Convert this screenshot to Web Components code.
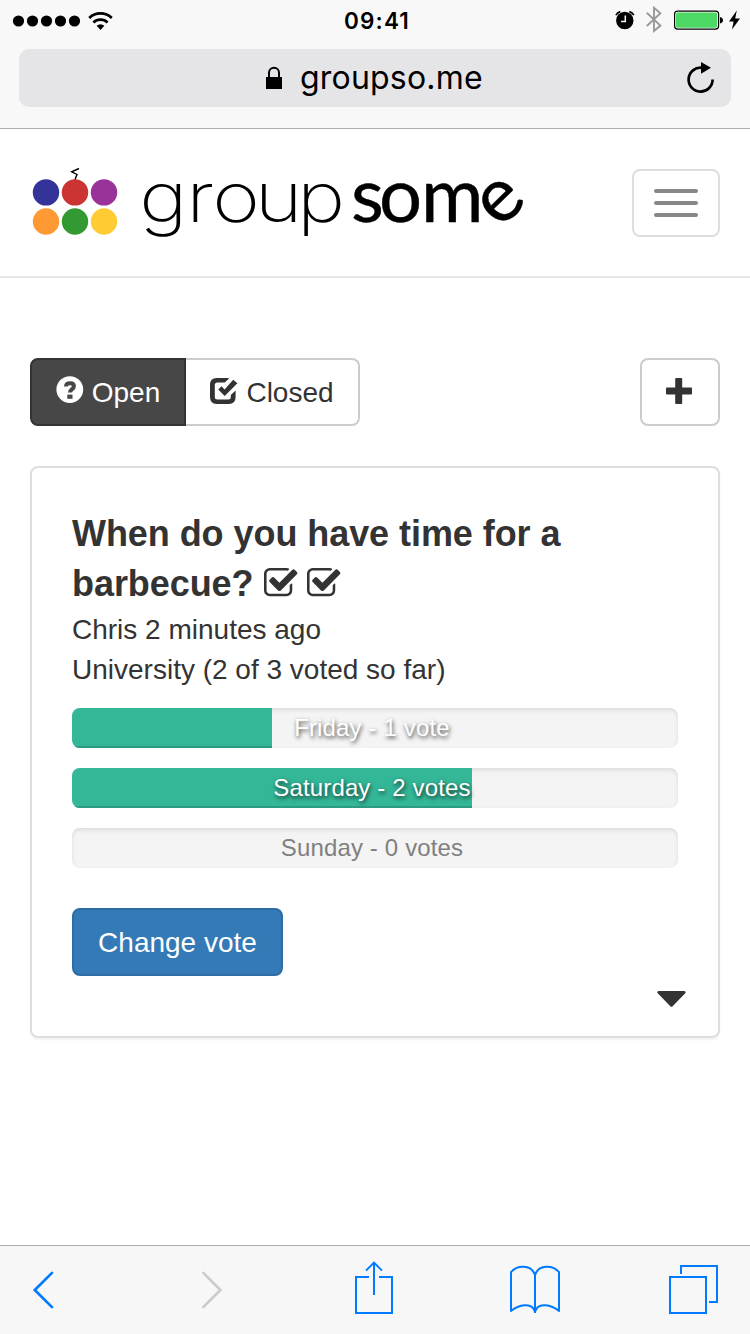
<!DOCTYPE html>
<html lang="en">
<head>
<meta charset="utf-8">
<title>groupsome</title>
<style>
html, body { margin: 0; height: 100%; background: #fff; }
body { font: 28px/40px "Liberation Sans", Arial, sans-serif; color: #333; overflow: hidden; }
</style>
</head>
<body>
<poll-app></poll-app>
<script>
const define = (name, html, setup) => {
  const template = document.createElement('template');
  template.innerHTML = '<style>*{box-sizing:border-box}svg{display:block;flex:none;overflow:visible}</style>' + html;
  customElements.define(name, class extends HTMLElement {
    constructor() {
      super();
      this.attachShadow({ mode: 'open' }).append(template.content.cloneNode(true));
    }
    connectedCallback() { if (setup) setup(this, this.shadowRoot); }
  });
};

/* Icon set: each entry is [width, height, viewBox, markup] */
const CHECK = '<path fill="currentColor" d="M1408 930v318q0 119-84.5 203.5t-203.5 84.5h-832q-119 0-203.5-84.5t-84.5-203.5v-832q0-119 84.5-203.5t203.5-84.5h832q63 0 117 25 15 7 18 23 3 17-9 29l-49 49q-10 10-23 10-3 0-9-2-23-6-45-6h-832q-66 0-113 47t-47 113v832q0 66 47 113t113 47h832q66 0 113-47t47-113v-254q0-13 9-22l64-64q10-10 23-10 6 0 12 3 20 8 20 29zm231-489l-814 814q-24 24-57 24t-57-24l-430-430q-24-24-24-57t24-57l110-110q24-24 57-24t57 24l263 263 647-647q24-24 57-24t57 24l110 110q24 24 24 57t-24 57z"/>';
const ICONS = {
  signal: [68, 12, '12 14.5 68 12', '<g fill="#000"><circle cx="18.5" cy="20.5" r="5.6"/><circle cx="32.5" cy="20.5" r="5.6"/><circle cx="46.5" cy="20.5" r="5.6"/><circle cx="60.5" cy="20.5" r="5.6"/><circle cx="74.5" cy="20.5" r="5.6"/></g>'],
  wifi: [26, 20, '88 10 26 20', '<g fill="none" stroke="#000" stroke-width="2.7"><path d="M89.2 17A16.2 16.2 0 0 1 111.8 17"/><path d="M93.4 21.4A10.4 10.4 0 0 1 107.6 21.4"/></g><path d="M96.6 24.8Q100.5 21.6 104.4 24.8L100.5 29z"/>'],
  alarm: [20, 20, '614.5 10 20 20', '<circle cx="624.3" cy="20.5" r="8.7"/><path d="M615.4 15.2Q616.6 12.4 619.8 11.6M628.8 11.6Q632 12.4 633.3 15.2" fill="none" stroke="#000" stroke-width="1.6"/><path d="M624.8 15.5V21.4H620.6" fill="none" stroke="#f7f7f7" stroke-width="1.5"/>'],
  bluetooth: [16, 28, '646 7 16 28', '<path d="M646.8 13.8L660.4 26.6L654 32V8.8L660.4 14.2L646.8 27" fill="none" stroke="#999" stroke-width="1.9"/>'],
  battery: [49, 20, '674 10.3 49 20', '<rect x="674.6" y="11.4" width="44" height="18" rx="3" fill="#fff" stroke="#000" stroke-width="1.2"/><rect x="676" y="12.8" width="41.2" height="15.2" rx="1.6" fill="#4cd964"/><path d="M720 17.2Q723 18 723 20.5T720 23.8z"/>'],
  bolt: [12, 20, '729 10 12 20', '<path d="M736.8 10.6L729 21.6H733.6L732 29.6L740 18.6H735.2z"/>'],
  lock: [16, 23, '266 67 16 23', '<rect x="266" y="77" width="16" height="12"/><path d="M269 78V72.7a5 5 0 0 1 10 0V78" fill="none" stroke="#000" stroke-width="2"/>'],
  reload: [28, 32, '687 61 28 32', '<path d="M712.6 79.6A12 12 0 1 1 702 67.7" fill="none" stroke="#000" stroke-width="2.7"/><path d="M701 62L711 67.8L701 73.7z"/>'],
  question: [28, 28, '56 376 28 28', '<circle cx="69.8" cy="389.6" r="13.4" fill="#fff"/><path d="M66 386.6C66 383.4 67.6 383.2 70.2 383.2C73 383.2 73.9 384.2 73.9 386.2C73.9 389.2 70 389 70 392.6" fill="none" stroke="#474747" stroke-width="4"/><rect x="67.3" y="394.6" width="5.2" height="4.2" fill="#474747"/>'],
  closed: [28, 28, '210 375.9 28 28', '<path fill="currentColor" fill-rule="evenodd" d="M229.3 378.2L224.8 382.5H217.4Q214.8 382.5 214.8 385V396.8Q214.8 399.3 217.4 399.3H228.2Q230.8 399.3 230.8 396.8V395L235.6 390.3V397Q235.6 403.8 229 403.8H216.6Q210 403.8 210 397V384.6Q210 377.8 216.6 377.8H227Q228.5 377.8 229.3 378.2z"/><path fill="currentColor" d="M218.3 389.3L221.4 386.2L224.6 389.3L233.2 379.6L237.4 383.2L224.7 395.8z"/>'],
  check: [33.4, 28.3, '0 128 1664 1408', CHECK],
  plus: [26, 26, '0 0 26 26', '<g fill="#333"><rect x="9.2" width="7" height="26" rx=".9"/><rect y="9.4" width="26" height="7" rx=".9"/></g>'],
  caret: [29, 16, '0 0 29 16', '<path d="M1.5 0H27.4Q29.2.4 28.5 2L15.6 15.2Q14.5 16.2 13.3 15.2L.5 2Q-.4.5 1.5 0z" fill="#333"/>'],
  back: [22, 38, '32 1271 22 38', '<path d="M52 1272.9L34.8 1290L52 1307.1" fill="none" stroke="#007aff" stroke-width="2.7" stroke-linecap="round"/>'],
  forward: [22, 38, '202 1271 22 38', '<path d="M203.3 1272.9L220.400 1290L203.3 1307.1" fill="none" stroke="#ccc" stroke-width="2.7" stroke-linecap="round"/>'],
  share: [40, 54, '354 1261 40 54', '<path d="M369 1277H356V1313H392V1277H379M374 1295V1263M366 1270.6L374 1262.6L382 1270.6" fill="none" stroke="#007aff" stroke-width="2"/>'],
  book: [52, 50, '509 1265 52 50', '<path d="M535 1313V1275C531.5 1264.2 517 1264.8 511 1272.2V1311C518 1305.3 532.5 1301 535 1312C537.5 1301 552 1305.3 559 1311V1272.2C553 1264.8 538.500 1264.2 535 1275" fill="none" stroke="#007aff" stroke-width="2" stroke-linejoin="round"/>'],
  tabs: [51, 50, '668 1265 51 50', '<path d="M670 1277H706V1313H670zM681 1274V1266H717V1302H709" fill="none" stroke="#007aff" stroke-width="2"/>']
};
define('ui-icon', '<style>:host{display:block;flex:none}</style><div></div>', (el, root) => {
  const [w, h, box, body] = ICONS[el.getAttribute('name')];
  root.querySelector('div').innerHTML = `<svg width="${w}" height="${h}" viewBox="${box}" aria-hidden="true">${body}</svg>`;
});

define('status-bar', `<style>
:host{display:grid;grid-template-columns:1fr auto 1fr;height:41px;align-items:center;padding:0 9px 0 12px;color:#000;font:600 22.5px/40px Inter,sans-serif}
div{display:flex;align-items:center}
.l{gap:8px}.r{justify-content:flex-end;padding-bottom:1px}
.time{letter-spacing:1.2px;padding-left:1px}
</style>
<div class="l"><ui-icon name="signal"></ui-icon><ui-icon name="wifi"></ui-icon></div>
<span class="time">09:41</span>
<div class="r"><ui-icon name="alarm"></ui-icon><ui-icon name="bluetooth" style="margin:0 12px 0 11px"></ui-icon><ui-icon name="battery"></ui-icon><ui-icon name="bolt" style="margin-left:6px"></ui-icon></div>`);

define('address-bar', `<style>
:host{display:flex;align-items:center;height:58px;margin:8px 19px 21px;background:#e5e5e7;border-radius:10px;color:#000;font:400 32px/58px Inter,sans-serif}
.lock{margin-left:247px}
.url{margin-left:18px;flex:1;letter-spacing:.2px}
.reload{margin:0 16px 3px 0}
</style>
<ui-icon class="lock" name="lock"></ui-icon><span class="url"><slot></slot></span><ui-icon class="reload" name="reload"></ui-icon>`);

define('brand-logo', `<style>:host{display:block}</style>
<svg width="492" height="76" viewBox="32 165 492 76">
<g><circle cx="46" cy="192.400" r="13.2" fill="#339"/><circle cx="75" cy="192.400" r="13.2" fill="#c33"/><circle cx="104" cy="192.400" r="13.2" fill="#939"/>
<circle cx="46" cy="221.500" r="13.2" fill="#f93"/><circle cx="75" cy="221.500" r="13.2" fill="#393"/><circle cx="104" cy="221.500" r="13.2" fill="#fc3"/></g>
<path d="M79 168.500L71.700 171.800L77 174.500L75 179.500" fill="none" stroke="#000" stroke-width="1.400"/>
<text transform="scale(1.18 1)" y="222.300" x="118 157.8 179.8 216 251.8" font-family="Inter" font-weight="200" font-size="69" fill="#000">group</text>
<text y="222 222 222 229.5" x="351 379 421 500" rotate="0 0 0 -44" font-family="Lato" font-weight="400" font-size="76" fill="#000" stroke="#000" stroke-width=".4">some</text>
</svg>`);

define('site-header', `<style>
:host{display:flex;align-items:center;justify-content:space-between;height:149px;border-bottom:2px solid #e7e7e7;padding:0 30px 0 32px}
button{width:88px;height:68px;border:2px solid #ddd;border-radius:8px;background:#fff;display:flex;flex-direction:column;align-items:center;justify-content:center;gap:8px;padding:0}
i{width:44px;height:4px;border-radius:2px;background:#888}
</style>
<brand-logo></brand-logo><button aria-label="Menu"><i></i><i></i><i></i></button>`);

define('ui-button', `<style>
:host{display:flex;align-items:center;justify-content:center;height:68px;border:2px solid #ccc;border-radius:8px;background:#fff;color:#333;gap:8px;box-sizing:border-box}
:host([kind=active]){background:#474747;border-color:#333;color:#fff;border-radius:8px 0 0 8px}
:host([kind=last]){border-left:0;border-radius:0 8px 8px 0}
:host([kind=primary]){background:#337ab7;border-color:#2e6da4;color:#fff;padding-top:1px}
</style><slot></slot>`);

define('poll-toolbar', `<style>
:host{display:flex;justify-content:space-between;margin:80px 30px 40px}
.group{display:flex}
span{padding-top:2px}
ui-icon{margin-bottom:4px}
ui-icon[name=plus]{margin:0 2px 2px 0}
</style>
<div class="group"><ui-button kind="active" style="width:156px"><ui-icon name="question"></ui-icon><span>Open</span></ui-button><ui-button kind="last" style="width:174px"><ui-icon name="closed"></ui-icon><span>Closed</span></ui-button></div>
<ui-button style="width:80px"><ui-icon name="plus"></ui-icon></ui-button>`);

define('vote-bar', `<style>
:host{display:grid;height:40px;border-radius:8px;background:#f4f4f4;overflow:hidden;font-size:24px;line-height:40px;letter-spacing:.15px;color:#fff;text-shadow:1px 2px 4px rgba(0,0,0,.75);box-shadow:inset 0 2px 4px rgba(0,0,0,.1)}
:host([empty]){color:#808080;text-shadow:none}
.fill,.label{grid-area:1/1}
.fill{background:#34b797;box-shadow:inset 0 -2px 0 #2c9c80}
.label{text-align:center;padding-right:6px}
:host([empty]) .fill{display:none}
</style><div class="fill"></div><div class="label"><slot></slot></div>`, (el, root) => {
  root.querySelector('.fill').style.width = (el.getAttribute('value') || 0) + '%';
});

define('poll-card', `<style>
:host{display:flex;flex-direction:column;height:572px;margin:0 30px;padding:41px 40px 0;border:2px solid #ddd;border-radius:8px;box-shadow:0 2px 2px rgba(0,0,0,.05);box-sizing:border-box}
h2{margin:0 0 1px;font-size:36px;line-height:50px;font-weight:700;letter-spacing:-.06px}
h2 ui-icon{display:inline-block;margin-left:10px;vertical-align:0;line-height:0}
.bars{display:grid;gap:20px;margin:18px 0 40px}
.more{align-self:flex-end;margin:15px -8px 0 0}
</style>
<h2>When do you have time for a<br>barbecue?<ui-icon name="check"></ui-icon><ui-icon name="check"></ui-icon></h2>
<div>Chris 2 minutes ago</div><div>University (2 of 3 voted so far)</div>
<div class="bars"><vote-bar value="33">Friday - 1 vote</vote-bar><vote-bar value="66">Saturday - 2 votes</vote-bar><vote-bar empty>Sunday - 0 votes</vote-bar></div>
<ui-button kind="primary" style="width:211px">Change vote</ui-button>
<ui-icon class="more" name="caret"></ui-icon>`);

define('browser-toolbar', `<style>
:host{display:flex;align-items:flex-end;height:89px;border-top:1px solid #aeaeae;background:#f7f7f7;padding:0 31px 19px 32px;box-sizing:border-box}
.nav{margin-bottom:6px}
</style>
<ui-icon class="nav" name="back"></ui-icon><ui-icon class="nav" name="forward" style="margin-left:148px"></ui-icon><ui-icon name="share" style="margin-left:130px"></ui-icon><ui-icon name="book" style="margin-left:115px"></ui-icon><ui-icon name="tabs" style="margin-left:107px"></ui-icon>`);

define('poll-app', `<style>
:host{display:flex;flex-direction:column;width:750px;height:1334px}
.chrome{background:#f8f8f8;border-bottom:1px solid #aeaeae}
main{flex:1}
</style>
<div class="chrome"><status-bar></status-bar><address-bar>groupso.me</address-bar></div>
<site-header></site-header>
<main><poll-toolbar></poll-toolbar><poll-card></poll-card></main>
<browser-toolbar></browser-toolbar>`);
</script>
</body>
</html>
